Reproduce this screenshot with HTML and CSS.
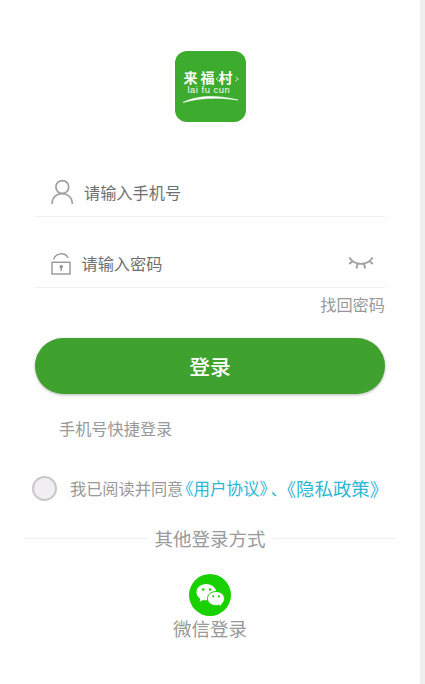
FILE: index.html
```html
<!DOCTYPE html>
<html lang="zh-CN">
<head>
<meta charset="utf-8">
<title>登录</title>
<link rel="stylesheet" href="styles.css">
</head>
<body>
<main class="screen">
  <div class="logo">
    <div class="logo-name"><span>来</span><span>福</span><span class="last">村</span></div>
    <div class="logo-latin">lai fu cun</div>
    <svg class="logo-art" viewBox="0 0 71 71" fill="none">
      <path d="M8 51.500C23 44 42 44 63 49C42 46 24 47 8 51.500Z" fill="#fff" stroke="#fff" stroke-width=".6"/>
      <path d="M43.500 26l-2.500 2 2.500 2M60.500 26l3 2-3.500 2.200" stroke="#d9f2d4" stroke-width=".8"/>
    </svg>
  </div>
  <form class="form">
    <div class="field phone">
      <svg class="user-icon" viewBox="0 0 24 26" fill="none" stroke="#a0a0a0" stroke-width="1.7">
        <circle cx="12.300" cy="8" r="6.400"/><path d="M2 25C2 11.200 22.300 11.200 22.300 25"/>
      </svg>
      <span>请输入手机号</span>
    </div>
    <div class="field password">
      <svg class="lock-icon" viewBox="0 0 20 22" fill="none" stroke="#969696" stroke-width="1.400">
        <rect x="1" y="9.300" width="18" height="11.700"/><path d="M2.600 6.500C5 -.8 14.500 -.8 17.200 5"/>
        <circle cx="10.200" cy="13.800" r="1.100" fill="#888"/><path d="M10.200 14v4"/>
      </svg>
      <span>请输入密码</span>
      <svg class="eye-icon" viewBox="0 0 26 14" fill="none" stroke="#a0a0a0" stroke-width="1.900">
        <path d="M1.300 1.500C7 10 19 10 24.700 1.500M4.500 5L1.300 8M9.500 7.800L8.400 12.500M16 7.800L17.200 12.500M21.500 5l3.200 3"/>
      </svg>
    </div>
    <div class="forgot">找回密码</div>
    <button class="submit" type="button">登录</button>
  </form>
  <div class="quick">手机号快捷登录</div>
  <div class="agreement">
    <i class="check"></i>
    <span>我已阅读并同意</span><span class="link terms">《用户协议》</span><span class="link comma">、</span><span class="link privacy">《隐私政策》</span>
  </div>
  <div class="divider"><span>其他登录方式</span></div>
  <div class="wechat">
    <svg viewBox="0 0 42 42">
      <circle cx="21" cy="21" r="21" fill="#19d000"/>
      <path d="M17.300 10C11.800 10 7.500 13.600 7.500 18.200c0 2.700 1.500 5 3.800 6.500l-.7 3.100 3.700-1.900c1 .3 2 .4 3 .4 5.500 0 9.900-3.600 9.900-8.100S22.800 10 17.300 10Z" fill="#fff"/>
      <path d="M27 17.500c-4.800 0-8.600 3.200-8.600 7.100s3.800 7.100 8.600 7.100c1.100 0 2.100-.2 3-.5l3.100 1.600-.7-2.600c2-1.300 3.200-3.300 3.200-5.600 0-3.900-3.800-7.100-8.600-7.100Z" fill="#fff" stroke="#19d000" stroke-width="1"/>
      <g fill="#19d000"><circle cx="14.200" cy="15.500" r="1.300"/><circle cx="21" cy="15.500" r="1.300"/><circle cx="24.200" cy="22.300" r="1.100"/><circle cx="30" cy="22.300" r="1.100"/></g>
    </svg>
    <span>微信登录</span>
  </div>
</main>
</body>
</html>
```
FILE: styles.css
```css
* { box-sizing: border-box; }
body {
  margin: 0;
  background: #efefef;
  color: #999;
  font: 16.2px/24px "Noto Sans CJK SC", sans-serif;
}
.screen {
  display: flex;
  flex-direction: column;
  width: 420px;
  height: 684px;
  padding-top: 51px;
  overflow: hidden;
  background: #fefefe;
}
.logo {
  position: relative;
  width: 71px;
  height: 71px;
  margin-left: 174.5px;
  padding-top: 18px;
  border-radius: 12px;
  background: #3dab2e;
  color: #fff;
}
.logo-name {
  display: flex;
  gap: 3px;
  padding-left: 9px;
  font-size: 14px;
  font-weight: 700;
  line-height: 16px;
}
.logo-name .last { margin-left: 1px; }
.logo-latin {
  margin-top: 1px;
  padding-left: 13px;
  font: 9.3px/9px "Liberation Sans", sans-serif;
  letter-spacing: .55px;
  white-space: nowrap;
}
.logo-art { position: absolute; inset: 0; }
.form { padding: 0 35px; }
.field {
  display: flex;
  align-items: center;
  height: 48px;
  padding-bottom: 1px;
  border-bottom: 1px solid #efefef;
  color: #707070;
}
.field span { margin-top: -1px; }
.phone { margin-top: 47px; }
.password { margin-top: 23px; padding-right: 11px; }
.user-icon { width: 24px; height: 26px; margin: 0 10px 0 15px; }
.lock-icon { width: 20px; height: 22px; margin: 1px 10.5px 0 16px; }
.eye-icon { width: 26px; height: 14px; margin-left: auto; }
.forgot { margin-top: 4px; text-align: right; }
.submit {
  display: block;
  width: 350px;
  height: 56px;
  margin-top: 22px;
  padding: 0;
  border: 0;
  border-radius: 28px;
  background: #3fa12e;
  box-shadow: 0 1px 3px rgba(0, 0, 0, .28);
  color: #fff;
  font: 500 20.8px/56px "Noto Sans CJK SC", sans-serif;
}
.quick { margin: 22px 0 0 59px; }
.agreement {
  display: flex;
  align-items: center;
  height: 26px;
  margin: 35px 0 0 32px;
  white-space: nowrap;
}
.check {
  width: 25px;
  height: 25px;
  margin-right: 13px;
  border: 2px solid #c8c8c8;
  border-radius: 50%;
  background: #f1eff3;
}
.link { color: #2db7d5; font-feature-settings: "halt"; }
.terms { margin-left: 2px; font-size: 16.5px; }
.comma { margin-left: 3px; }
.privacy { margin-left: 8px; font-size: 18.4px; }
.divider {
  display: flex;
  align-items: center;
  gap: 7px;
  height: 28px;
  margin: 23px 24px 0 24px;
  font-size: 18.5px;
}
.divider span { margin-top: -1px; }
.divider::before, .divider::after {
  content: "";
  flex: 1;
  height: 1px;
  background: #efefef;
}
.wechat {
  display: flex;
  flex-direction: column;
  align-items: center;
  margin-top: 22px;
  font-size: 18.5px;
  line-height: 26px;
}
.wechat svg { width: 42px; height: 42px; }
.wechat span { margin-top: -1px; }
```
